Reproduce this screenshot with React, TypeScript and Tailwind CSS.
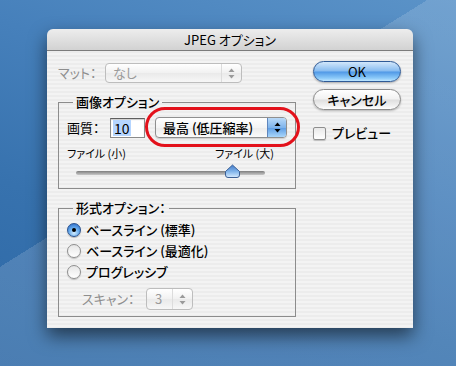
function UpDown({ color = '#000' }: { color?: string }) {
  return (
    <svg width="7" height="11" viewBox="0 0 7 11">
      <path d="M3.5 0.5 L6.5 4 L0.5 4 Z" fill={color} />
      <path d="M0.5 7 L6.5 7 L3.5 10.5 Z" fill={color} />
    </svg>
  );
}

function Slider() {
  return (
    <svg width="200" height="16" viewBox="0 0 200 16">
      <defs>
        <linearGradient id="track" x1="0" y1="0" x2="0" y2="1">
          <stop offset="0" stopColor="#7d7d7d" />
          <stop offset="1" stopColor="#c8c8c8" />
        </linearGradient>
        <linearGradient id="thumb" x1="0" y1="0" x2="0" y2="1">
          <stop offset="0" stopColor="#3f79c9" />
          <stop offset="0.55" stopColor="#86b8ec" />
          <stop offset="1" stopColor="#d8ecff" />
        </linearGradient>
      </defs>
      <rect x="4" y="7" width="189" height="4" rx="2" fill="url(#track)" />
      <path
        d="M160.5 1 L167.5 7.5 L167.5 11 Q167.5 13.5 165 13.5 L156 13.5 Q153.5 13.5 153.5 11 L153.5 7.5 Z"
        fill="url(#thumb)"
        stroke="#3b5f94"
        strokeWidth="1"
      />
    </svg>
  );
}

function Radio({ checked, label }: { checked?: boolean; label: string }) {
  return (
    <div className="flex items-center h-[21px]">
      {checked ? (
        <div className="w-[14px] h-[14px] rounded-full border border-[#2a5390] bg-[radial-gradient(circle_at_50%_75%,#d2ecff_0%,#6aaeee_45%,#2160c2_100%)] flex items-center justify-center shadow-[0_1px_1px_rgba(0,0,0,0.25)]">
          <div className="w-[4px] h-[4px] rounded-full bg-black" />
        </div>
      ) : (
        <div className="w-[14px] h-[14px] rounded-full border border-[#8e8e8e] bg-[linear-gradient(#e6e6e6,#ffffff)] shadow-[0_1px_1px_rgba(0,0,0,0.2)]" />
      )}
      <span className="ml-[5px] text-[13px] font-medium text-black">{label}</span>
    </div>
  );
}

export default function App() {
  return (
    <div className="w-[456px] h-[366px] overflow-hidden pl-[47px] pt-[29px] font-['Noto_Sans_CJK_JP',sans-serif] [font-feature-settings:'palt'] bg-[linear-gradient(148deg,rgba(255,255,255,0)_41%,rgba(255,255,255,0.14)_41%),linear-gradient(200deg,#5b93c8_0%,#4680bb_35%,#3772ae_65%,#2d68a6_100%)]">
      <div className="w-[366px] h-[299px] flex flex-col rounded-t-[6px] overflow-hidden shadow-[0_8px_18px_rgba(0,0,0,0.55)]">
        {/* title bar */}
        <div className="h-[22px] shrink-0 border-b border-[#7c7c7c] bg-[linear-gradient(#ededed,#d2d2d2)] text-center text-[13px] leading-[21px] text-black">
          JPEG オプション
        </div>

        {/* body */}
        <div className="flex-1 flex pl-[11px] pr-[12px] bg-[repeating-linear-gradient(180deg,#ececec_0px,#ececec_2px,#f3f3f3_2px,#f3f3f3_4px)]">
          {/* left column */}
          <div className="w-[238px] pt-[12px]">
            <div className="flex items-center h-[20px]">
              <span className="w-[47px] text-[13px] text-[#8e8e8e]">マット：</span>
              <div className="w-[137px] h-[20px] flex items-center rounded-[4px] border border-[#bdbdbd] bg-[linear-gradient(#ffffff,#f1f1f1_50%,#e9e9e9_50%,#f7f7f7)]">
                <span className="flex-1 pl-[7px] text-[13px] text-[#9a9a9a]">なし</span>
                <div className="w-[20px] h-full flex items-center justify-center border-l border-[#dcdcdc]">
                  <UpDown color="#9a9a9a" />
                </div>
              </div>
            </div>

            <fieldset className="mt-[11px] border border-[#8c8c8c] pl-[8px] pr-[8px] pt-[7px] pb-[8px]">
              <legend className="ml-[6px] px-[3px] text-[13px] leading-[16px] font-medium text-black">画像オプション</legend>
              <div className="relative flex items-center h-[21px]">
                <span className="w-[43px] text-[13px] text-black">画質：</span>
                <div className="w-[35px] h-[20px] flex items-center border border-[#8a8a8a] border-t-[#5e5e5e] bg-white shadow-[inset_0_1px_1px_rgba(0,0,0,0.2)] pl-[2px]">
                  <span className="bg-[#b5d5ff] px-[1px] text-[14px] leading-[16px] text-black">10</span>
                </div>
                <div className="ml-[10px] w-[132px] h-[21px] flex items-center rounded-[4px] border border-[#8f8f8f] bg-[linear-gradient(#ffffff,#f4f4f4_50%,#ebebeb_50%,#fafafa)] shadow-[0_1px_1px_rgba(0,0,0,0.15)] overflow-hidden">
                  <span className="flex-1 pl-[7px] text-[13px] font-medium text-black">最高 (低圧縮率)</span>
                  <div className="w-[19px] h-full flex items-center justify-center bg-[linear-gradient(#b9d9f8,#7fb4ec_50%,#5a9ae3_50%,#a9d6fb)] border-l border-[#5f86bd]">
                    <UpDown />
                  </div>
                </div>
                <div className="absolute left-[78px] top-[-10px] w-[155px] h-[40px] rounded-[21px] border-[3px] border-[#e3111b]" />
              </div>
              <div className="mt-[8px] w-[207px] flex justify-between h-[14px] text-[11px] leading-[14px] text-black">
                <span>ファイル (小)</span>
                <span>ファイル (大)</span>
              </div>
              <div className="mt-[4px] ml-[5px] h-[16px]">
                <Slider />
              </div>
            </fieldset>

            <fieldset className="mt-[11px] border border-[#8c8c8c] pl-[8px] pr-[8px] pt-[3px] pb-[6px]">
              <legend className="ml-[6px] px-[3px] text-[13px] leading-[16px] font-medium text-black">形式オプション：</legend>
              <Radio checked label="ベースライン (標準)" />
              <Radio label="ベースライン (最適化)" />
              <Radio label="プログレッシブ" />
              <div className="mt-[6px] flex items-center h-[22px] pl-[15px]">
                <span className="w-[64px] text-[13px] text-[#8e8e8e]">スキャン：</span>
                <div className="w-[47px] h-[22px] flex items-center rounded-[4px] border border-[#bdbdbd] bg-[linear-gradient(#ffffff,#f1f1f1_50%,#e9e9e9_50%,#f7f7f7)]">
                  <span className="flex-1 pl-[8px] text-[13px] text-[#9a9a9a]">3</span>
                  <div className="w-[20px] h-full flex items-center justify-center border-l border-[#dcdcdc]">
                    <UpDown color="#9a9a9a" />
                  </div>
                </div>
              </div>
            </fieldset>
          </div>

          {/* right column */}
          <div className="ml-[17px] w-[88px] pt-[10px]">
            <div className="h-[21px] rounded-full border border-[#2f5a96] bg-[linear-gradient(#d2e7fb,#86bbf0_48%,#4f98e6_52%,#8ccaf9_85%,#bfe6ff)] flex items-center justify-center text-[13px] text-black shadow-[0_1px_2px_rgba(0,0,0,0.3)]">
              OK
            </div>
            <div className="mt-[7px] h-[21px] rounded-full border border-[#8a8a8a] bg-[linear-gradient(#ffffff,#f2f2f2_48%,#dedede_52%,#f2f2f2_85%,#ffffff)] flex items-center justify-center text-[13px] font-medium text-black shadow-[0_1px_2px_rgba(0,0,0,0.25)]">
              キャンセル
            </div>
            <div className="mt-[16px] flex items-center h-[14px]">
              <div className="w-[13px] h-[13px] rounded-[2px] border border-[#8e8e8e] bg-[linear-gradient(#e9e9e9,#ffffff)] shadow-[0_1px_1px_rgba(0,0,0,0.2)]" />
              <span className="ml-[6px] text-[13px] font-medium text-black">プレビュー</span>
            </div>
          </div>
        </div>
      </div>
    </div>
  );
}
